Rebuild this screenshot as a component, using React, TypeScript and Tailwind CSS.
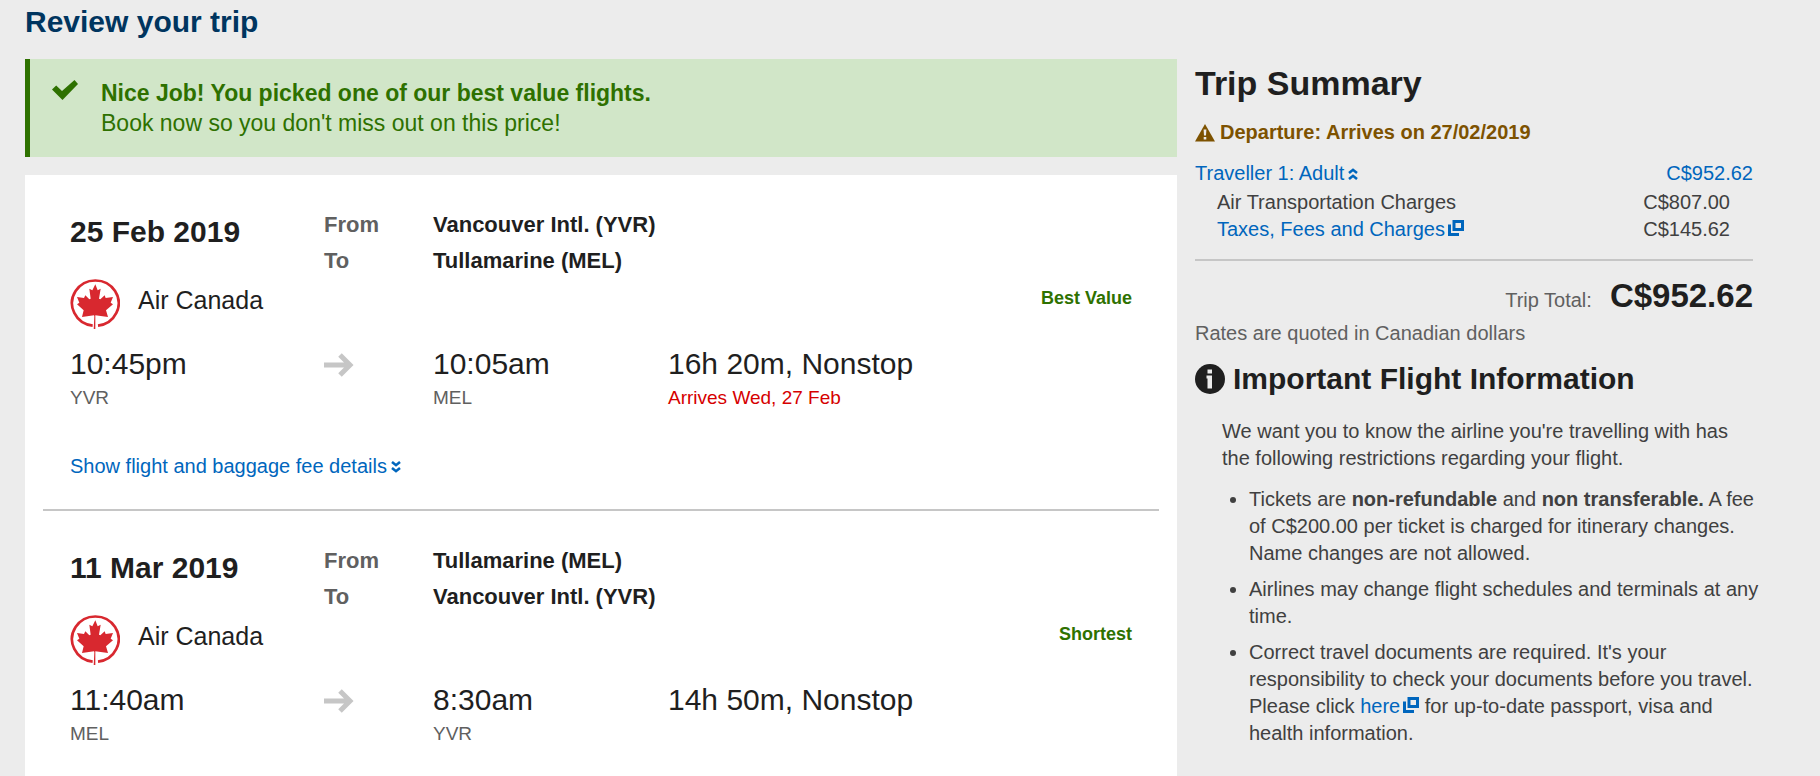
import React, { useState } from 'react';

interface Flight {
  id: string;
  date: string;
  airline: string;
  from: string;
  to: string;
  tag: string;
  departTime: string;
  departCode: string;
  arriveTime: string;
  arriveCode: string;
  duration: string;
  note?: string;
  detailsLabel?: string;
}

const FLIGHTS: Flight[] = [
  {
    id: 'outbound',
    date: '25 Feb 2019',
    airline: 'Air Canada',
    from: 'Vancouver Intl. (YVR)',
    to: 'Tullamarine (MEL)',
    tag: 'Best Value',
    departTime: '10:45pm',
    departCode: 'YVR',
    arriveTime: '10:05am',
    arriveCode: 'MEL',
    duration: '16h 20m, Nonstop',
    note: 'Arrives Wed, 27 Feb',
    detailsLabel: 'Show flight and baggage fee details',
  },
  {
    id: 'return',
    date: '11 Mar 2019',
    airline: 'Air Canada',
    from: 'Tullamarine (MEL)',
    to: 'Vancouver Intl. (YVR)',
    tag: 'Shortest',
    departTime: '11:40am',
    departCode: 'MEL',
    arriveTime: '8:30am',
    arriveCode: 'YVR',
    duration: '14h 50m, Nonstop',
  },
];

const CheckIcon = () => (
  <svg viewBox="0 0 26 20" className="w-[26px] h-5 shrink-0" fill="currentColor" aria-hidden="true">
    <path d="M0 9.500 4.200 5.500l5.800 5.500L22.500 0 26 4 10.500 20z" />
  </svg>
);

const WarningIcon = () => (
  <svg viewBox="0 0 20 18" className="w-5 h-[18px] shrink-0" aria-hidden="true">
    <path d="M10 0 20 17.500H0z" fill="currentColor" />
    <path d="M8.600 5.500h2.800l-.4 6H9zM8.700 13h2.600v2.500H8.700z" fill="#ececec" />
  </svg>
);

const InfoIcon = () => (
  <svg viewBox="0 0 30 30" className="w-[30px] h-[30px] shrink-0" aria-hidden="true">
    <circle cx="15" cy="15" r="15" fill="currentColor" />
    <path d="M12.500 5.500h4.500v4h-4.500zM11.500 11.500h5.500v13h-4.500v-10h-1z" fill="#ececec" />
  </svg>
);

const ArrowIcon = () => (
  <svg viewBox="0 0 30 24" className="w-[30px] h-6" fill="none" stroke="#c6c6c6" strokeWidth="5" aria-hidden="true">
    <path d="M0 12h26M16 2l10 10-10 10" />
  </svg>
);

const DoubleChevron: React.FC<{ up?: boolean }> = ({ up }) => (
  <svg
    viewBox="0 0 10 12"
    className={`inline-block w-2.5 h-3 ${up ? 'rotate-180' : ''}`}
    fill="none"
    stroke="currentColor"
    strokeWidth="2.6"
    aria-hidden="true"
  >
    <path d="M1 1l4 3.200L9 1M1 7l4 3.200L9 7" />
  </svg>
);

const NewWindowIcon = () => (
  <svg viewBox="0 0 16 16" className="ml-[3px] inline-block align-baseline w-4 h-4" fill="none" stroke="currentColor" strokeWidth="3" aria-hidden="true">
    <path d="M6 1.500h8.500v8H6z" />
    <path d="M1.500 4.500v10H11" />
  </svg>
);

const MapleLogo = () => (
  <svg viewBox="30 24 150 150" className="w-[50px] h-[50px] shrink-0" fill="#d8282f" role="img" aria-label="Air Canada">
    <path d="M114 164A70 68 0 1 0 98 164" fill="none" stroke="#d8282f" strokeWidth="8" />
    <path d="M106 40l-9 18-9-5 4 30-4 2-12-12-4 8-21-3 7 17-7 5 20 18-5 20 36-5 1 3-2 42 5 4 0-49 38 5-6-20 21-18-7-5 7-17-22 3-3-8-13 12-4-2 5-30-9 5z" />
  </svg>
);

const FlightSection: React.FC<{ flight: Flight; isLast: boolean }> = ({ flight, isLast }) => (
  <section className={`px-[27px] pt-8 pb-[29px] ${isLast ? '' : 'border-b-2 border-[#c6c6c6]'}`}>
    <div className="grid grid-cols-[254px_109px_1fr]">
      <h2 className="pt-[7px] text-[30px] leading-9 font-bold">{flight.date}</h2>
      <div className="text-[22px] leading-9 font-bold text-[#606060]">
        <div>From</div>
        <div>To</div>
      </div>
      <div className="text-[22px] leading-9 font-bold">
        <div>{flight.from}</div>
        <div>{flight.to}</div>
      </div>
    </div>

    <div className="flex items-start">
      <MapleLogo />
      <span className="ml-[18px] pt-[3px] text-[25px] leading-9">{flight.airline}</span>
      <span className="ml-auto pt-1.5 text-lg leading-[27px] font-bold text-[#2e7100]">{flight.tag}</span>
    </div>

    <div className="mt-[17px] grid grid-cols-[254px_109px_235px_1fr]">
      <div>
        <div className="text-[30px] leading-9">{flight.departTime}</div>
        <div className="mt-0.5 text-[19px] leading-[27px] text-[#606060]">{flight.departCode}</div>
      </div>
      <div className="pt-[7px]">
        <ArrowIcon />
      </div>
      <div>
        <div className="text-[30px] leading-9">{flight.arriveTime}</div>
        <div className="mt-0.5 text-[19px] leading-[27px] text-[#606060]">{flight.arriveCode}</div>
      </div>
      <div>
        <div className="text-[30px] leading-9">{flight.duration}</div>
        {flight.note && <div className="mt-0.5 text-[19px] leading-[27px] text-[#d60000]">{flight.note}</div>}
      </div>
    </div>

    {flight.detailsLabel && (
      <button type="button" className="mt-[42px] flex items-center gap-1 text-[20px] leading-[27px] text-[#0066bd]">
        {flight.detailsLabel}
        <DoubleChevron />
      </button>
    )}
  </section>
);

const TripSummary = () => {
  const [isOpen, setIsOpen] = useState(true);

  return (
    <aside className="pl-[18px] pt-1 text-[20px] leading-[27px] text-[#404040]">
      <h2 className="text-[34px] leading-10 font-bold text-[#1f1f1f]">Trip Summary</h2>
      <p className="mt-4 flex items-center gap-[5px] font-bold text-[#7d5200]">
        <WarningIcon />
        Departure: Arrives on 27/02/2019
      </p>

      <button
        type="button"
        aria-expanded={isOpen}
        onClick={() => setIsOpen(!isOpen)}
        className="mt-[14px] flex w-full items-center gap-1 text-[#0066bd]"
      >
        Traveller 1: Adult
        <DoubleChevron up={isOpen} />
        <span className="ml-auto">C$952.62</span>
      </button>
      {isOpen && (
        <div className="mt-0.5 pr-[23px] pl-[22px]">
          <table className="w-full">
            <tbody>
              <tr>
                <th scope="row" className="text-left font-normal">Air Transportation Charges</th>
                <td className="text-right">C$807.00</td>
              </tr>
              <tr>
                <th scope="row" className="text-left font-normal">
                  <a href="#taxes" className="text-[#0066bd]">Taxes, Fees and Charges<NewWindowIcon /></a>
                </th>
                <td className="text-right">C$145.62</td>
              </tr>
            </tbody>
          </table>
        </div>
      )}

      <div className="mt-4 flex items-baseline justify-end gap-[18px] border-t-2 border-[#c6c6c6] pt-[15px]">
        <span className="text-[#606060]">Trip Total:</span>
        <span className="text-[33px] leading-10 font-bold text-[#1f1f1f]">C$952.62</span>
      </div>
      <p className="mt-1 text-[#606060]">Rates are quoted in Canadian dollars</p>

      <h2 className="mt-[14px] flex items-center gap-2 text-[30px] leading-9 font-bold text-[#1f1f1f]">
        <InfoIcon />
        Important Flight Information
      </h2>
      <p className="mt-[21px] pl-[27px]">
        We want you to know the airline you're travelling with has the following restrictions regarding your flight.
      </p>
      <ul className="mt-[14px] -mr-4 list-disc space-y-[9px] pl-[54px]">
        <li>
          Tickets are <b>non-refundable</b> and <b>non transferable.</b> A fee of C$200.00 per ticket is charged for
          itinerary changes. Name changes are not allowed.
        </li>
        <li>Airlines may change flight schedules and terminals at any time.</li>
        <li>
          Correct travel documents are required. It's your responsibility to check your documents before you travel.
          Please click <a href="#documents" className="text-[#0066bd]">here<NewWindowIcon /></a> for up-to-date
          passport, visa and health information.
        </li>
      </ul>
    </aside>
  );
};

const App: React.FC = () => (
  <div className="flex min-h-screen flex-col bg-[#ececec] pl-[25px] pr-[67px] pt-1 font-['Liberation_Sans',Arial,sans-serif] text-[#1f1f1f]">
    <h1 className="mb-[19px] text-[30px] leading-9 font-bold text-[#00355f]">Review your trip</h1>
    <div className="grid flex-1 grid-cols-[2fr_1fr]">
      <main className="flex flex-col">
        <div className="flex gap-[23px] border-l-[5px] border-[#2e7100] bg-[#d1e6c8] py-[19px] pl-[22px] pr-6 text-[#2e7100]">
          <div className="pt-0.5">
            <CheckIcon />
          </div>
          <div className="text-[23px] leading-[30px]">
            <p className="font-bold">Nice Job! You picked one of our best value flights.</p>
            <p>Book now so you don't miss out on this price!</p>
          </div>
        </div>

        <div className="mt-[18px] flex-1 bg-white px-[18px]">
          {FLIGHTS.map((flight, i) => (
            <FlightSection key={flight.id} flight={flight} isLast={i === FLIGHTS.length - 1} />
          ))}
        </div>
      </main>
      <TripSummary />
    </div>
  </div>
);

export default App;
